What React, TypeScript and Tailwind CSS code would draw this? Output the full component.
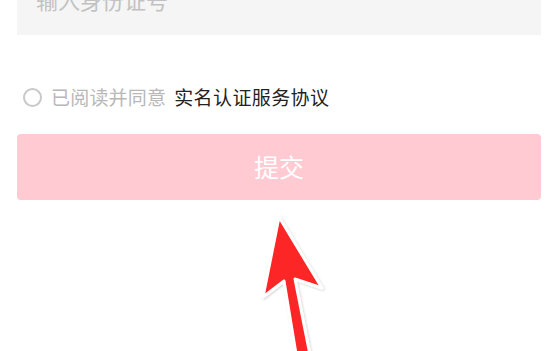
import React from "react";

const font = {
  fontFamily: '"Noto Sans CJK SC", "Noto Sans", sans-serif',
};

function Arrow() {
  return (
    <svg
      className="absolute left-0 top-0 pointer-events-none"
      width={558}
      height={351}
      viewBox="0 0 558 351"
    >
      <defs>
        <filter id="sh" x="-20%" y="-20%" width="140%" height="140%">
          <feDropShadow dx="1" dy="1" stdDeviation="1.2" floodColor="#000" floodOpacity="0.18" />
        </filter>
      </defs>
      <polygon
        points="279,217 322,288 295,279 311,360 297,360 284,281 263,297"
        fill="#fd2626"
        stroke="#ffffff"
        strokeWidth={3}
        strokeLinejoin="round"
        filter="url(#sh)"
      />
    </svg>
  );
}

export default function App() {
  return (
    <div className="relative w-[558px] h-[351px] overflow-hidden bg-white" style={font}>
      <div className="px-[17px]">
        <div className="-mt-[25px] h-[60px] bg-[#f5f5f5] pl-[19px] pt-[9px]">
          <span className="text-[22px] leading-[30px] text-[#c2c2c2]">输入身份证号</span>
        </div>

        <div className="mt-[50px] flex items-center h-[24px] pl-[6px]">
          <span className="w-[19px] h-[19px] rounded-full border-2 border-[#c9c9c9]" />
          <span className="ml-[9px] text-[19px] leading-[24px] tracking-[0.2px] text-[#b8b8b8]">已阅读并同意</span>
          <span className="ml-[8px] text-[19px] leading-[24px] tracking-[0.4px] text-[#222222]">实名认证服务协议</span>
        </div>

        <button className="mt-[25px] w-full h-[66px] rounded-[4px] bg-[#ffcad2] text-white text-[25px] flex items-center justify-center">
          提交
        </button>
      </div>
      <Arrow />
    </div>
  );
}
